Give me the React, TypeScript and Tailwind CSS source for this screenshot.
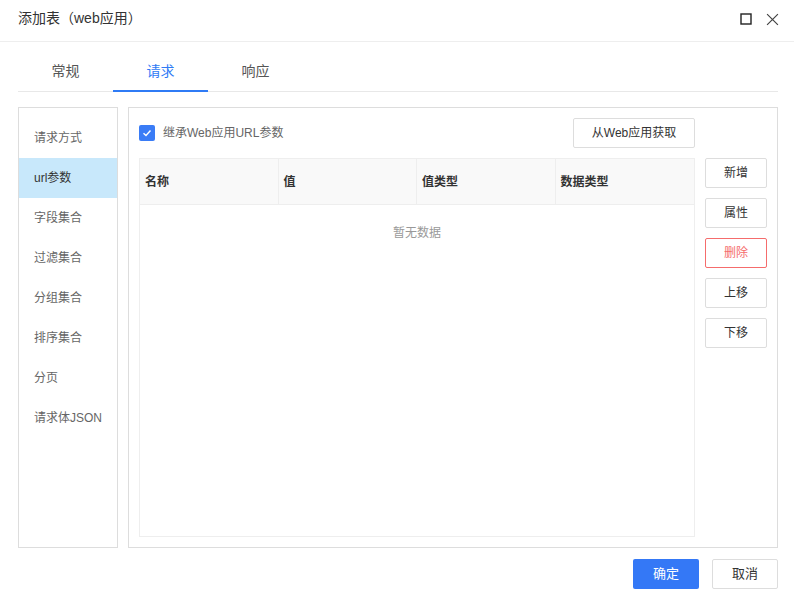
import React from 'react';

const font = { fontFamily: '"Liberation Sans", "Noto Sans CJK SC", sans-serif' };

const menu = ['请求方式', 'url参数', '字段集合', '过滤集合', '分组集合', '排序集合', '分页', '请求体JSON'];
const cols = ['名称', '值', '值类型', '数据类型'];
const actions = ['新增', '属性', '删除', '上移', '下移'];

export default function App() {
  return (
    <div style={font} className="w-[794px] h-[595px] bg-white flex flex-col text-[#333]">
      {/* Header */}
      <div className="h-[42px] shrink-0 px-[18px] flex items-center justify-between border-b border-[#eee]">
        <span className="text-[14px] -mt-[4px]">添加表（web应用）</span>
        <div className="flex items-center gap-[14px] -mt-[3px] mr-[-3px]">
          <svg width="12" height="12" viewBox="0 0 12 12">
            <rect x="1" y="1" width="10" height="10" fill="none" stroke="#222" strokeWidth="1.4" />
          </svg>
          <svg width="13" height="13" viewBox="0 0 12 12">
            <path d="M1 1 L11 11 M11 1 L1 11" stroke="#444" strokeWidth="1.1" fill="none" />
          </svg>
        </div>
      </div>

      {/* Tabs */}
      <div className="ml-[18px] mr-[16px] h-[50px] shrink-0 flex items-end border-b border-[#e8e8e8]">
        {['常规', '请求', '响应'].map((t, i) => (
          <div
            key={t}
            className={
              i === 1
                ? 'w-[95px] h-[40px] -mb-px flex items-center justify-center text-[14px] text-[#2f7bf5] border-b-2 border-[#2f7bf5]'
                : 'w-[95px] h-[40px] -mb-px flex items-center justify-center text-[14px] text-[#555] border-b-2 border-transparent'
            }
          >
            {t}
          </div>
        ))}
      </div>

      {/* Body */}
      <div className="ml-[18px] mr-[16px] mt-[15px] h-[441px] flex gap-[10px]">
        <div className="w-[100px] shrink-0 border border-[#ddd] pt-[10px]">
          {menu.map((m, i) => (
            <div
              key={m}
              className={
                i === 1
                  ? 'h-[40px] pl-[15px] flex items-center text-[12px] text-[#333] bg-[#c8e8fb]'
                  : 'h-[40px] pl-[15px] flex items-center text-[12px] text-[#666]'
              }
            >
              {m}
            </div>
          ))}
        </div>

        <div className="flex-1 border border-[#ddd] p-[10px] flex gap-[10px]">
          <div className="w-[556px] flex flex-col">
            <div className="h-[30px] flex items-center justify-between mb-[10px]">
              <div className="flex items-center">
                <span className="w-[16px] h-[16px] rounded-[2px] bg-[#3a7cf6] flex items-center justify-center">
                  <svg width="10" height="10" viewBox="0 0 10 10">
                    <path d="M1.5 5.2 L4 7.5 L8.5 2.5" stroke="#fff" strokeWidth="1.4" fill="none" />
                  </svg>
                </span>
                <span className="ml-[8px] text-[12px] text-[#666]">继承Web应用URL参数</span>
              </div>
              <button className="w-[122px] h-[30px] border border-[#ddd] rounded-[2px] text-[12px] text-[#333] bg-white">
                从Web应用获取
              </button>
            </div>
            <div className="flex-1 border border-[#eee] flex flex-col">
              <div className="h-[46px] grid grid-cols-4 bg-[#f9f9f9] border-b border-[#eee]">
                {cols.map((c, i) => (
                  <div
                    key={c}
                    className={
                      i < 3
                        ? 'flex items-center pl-[5px] text-[12px] font-bold text-[#333] border-r border-[#eee]'
                        : 'flex items-center pl-[5px] text-[12px] font-bold text-[#333]'
                    }
                  >
                    {c}
                  </div>
                ))}
              </div>
              <div className="pt-[19px] text-center text-[12px] leading-[18px] text-[#999]">暂无数据</div>
            </div>
          </div>

          <div className="w-[62px] mt-[40px] flex flex-col gap-[10px]">
            {actions.map((a) => (
              <button
                key={a}
                className={
                  a === '删除'
                    ? 'h-[30px] border border-[#f56c6c] rounded-[2px] text-[12px] text-[#f56c6c] bg-white'
                    : 'h-[30px] border border-[#ddd] rounded-[2px] text-[12px] text-[#333] bg-white'
                }
              >
                {a}
              </button>
            ))}
          </div>
        </div>
      </div>

      {/* Footer */}
      <div className="mt-[11px] mr-[16px] flex justify-end gap-[13px]">
        <button className="w-[66px] h-[30px] rounded-[2px] bg-[#3478f6] text-white text-[13px]">确定</button>
        <button className="w-[66px] h-[30px] rounded-[2px] border border-[#ddd] bg-white text-[#333] text-[13px]">取消</button>
      </div>
    </div>
  );
}
